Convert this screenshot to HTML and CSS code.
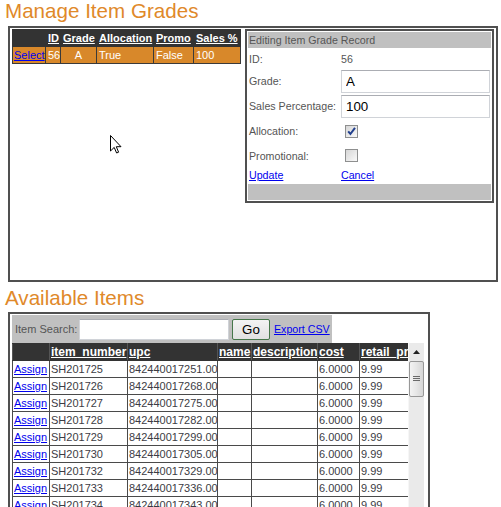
FILE: index.html
```html
<!DOCTYPE html>
<html>
<head>
<meta charset="utf-8">
<title>Manage Item Grades</title>
<link rel="stylesheet" href="styles.css">
</head>
<body>
<h1 class="title title-manage">Manage Item Grades</h1>
<div class="box grades-box">
  <div class="grades-layout">
    <table class="grades">
      <colgroup><col class="c-sel"><col class="c-id"><col class="c-grade"><col class="c-alloc"><col class="c-promo"><col class="c-sales"></colgroup>
      <thead>
        <tr><th></th><th><a href="#">ID</a></th><th><a href="#">Grade</a></th><th><a href="#">Allocation</a></th><th><a href="#">Promo</a></th><th><a href="#">Sales %</a></th></tr>
      </thead>
      <tbody>
        <tr class="selected"><td><a href="#" class="sel-link">Select</a></td><td>56</td><td class="center">A</td><td>True</td><td>False</td><td>100</td></tr>
      </tbody>
    </table>
    <div class="edit">
      <div class="edit-head">Editing Item Grade Record</div>
      <div class="edit-grid">
        <span class="lbl">ID:</span><span class="val">56</span>
        <span class="lbl">Grade:</span><input class="txt" type="text" value="A">
        <span class="lbl">Sales Percentage:</span><input class="txt txt-end" type="text" value="100">
        <span class="lbl">Allocation:</span><span class="chk"><svg width="11" height="11" viewBox="0 0 11 11"><path d="M2.2 5.4 L4.4 8 L9 1.8" fill="none" stroke="#22408e" stroke-width="2"/></svg></span>
        <span class="lbl">Promotional:</span><span class="chk"></span>
        <a href="#" class="lnk">Update</a><a href="#" class="lnk">Cancel</a>
      </div>
      <div class="edit-foot"></div>
    </div>
  </div>
  <svg class="cursor" width="12" height="19" viewBox="0 0 12 19"><path d="M0.5 0.5 L0.5 16 L4.2 12.4 L6.6 18 L8.6 17.2 L6.3 11.7 L11 11.7 Z" fill="#fff" stroke="#000" stroke-width="1" stroke-linejoin="miter"/></svg>
</div>

<h1 class="title title-items">Available Items</h1>
<div class="box items-box">
  <div class="search">
    <span class="search-label">Item Search:</span><input class="search-input" type="text"><button class="go" type="button">Go</button><a href="#" class="export">Export CSV</a>
  </div>
  <div class="items-scroll">
    <div class="items-clip">
      <table class="items">
        <colgroup><col class="i-assign"><col class="i-num"><col class="i-upc"><col class="i-name"><col class="i-desc"><col class="i-cost"><col class="i-retail"></colgroup>
        <thead>
          <tr><th></th><th><a href="#">item_number</a></th><th><a href="#">upc</a></th><th><a href="#">name</a></th><th><a href="#">description</a></th><th><a href="#">cost</a></th><th><a href="#">retail_price</a></th></tr>
        </thead>
        <tbody>
          <tr><td><a href="#">Assign</a></td><td>SH201725</td><td>842440017251.00</td><td></td><td></td><td>6.0000</td><td>9.99</td></tr>
          <tr><td><a href="#">Assign</a></td><td>SH201726</td><td>842440017268.00</td><td></td><td></td><td>6.0000</td><td>9.99</td></tr>
          <tr><td><a href="#">Assign</a></td><td>SH201727</td><td>842440017275.00</td><td></td><td></td><td>6.0000</td><td>9.99</td></tr>
          <tr><td><a href="#">Assign</a></td><td>SH201728</td><td>842440017282.00</td><td></td><td></td><td>6.0000</td><td>9.99</td></tr>
          <tr><td><a href="#">Assign</a></td><td>SH201729</td><td>842440017299.00</td><td></td><td></td><td>6.0000</td><td>9.99</td></tr>
          <tr><td><a href="#">Assign</a></td><td>SH201730</td><td>842440017305.00</td><td></td><td></td><td>6.0000</td><td>9.99</td></tr>
          <tr><td><a href="#">Assign</a></td><td>SH201732</td><td>842440017329.00</td><td></td><td></td><td>6.0000</td><td>9.99</td></tr>
          <tr><td><a href="#">Assign</a></td><td>SH201733</td><td>842440017336.00</td><td></td><td></td><td>6.0000</td><td>9.99</td></tr>
          <tr><td><a href="#">Assign</a></td><td>SH201734</td><td>842440017343.00</td><td></td><td></td><td>6.0000</td><td>9.99</td></tr>
          <tr><td><a href="#">Assign</a></td><td>SH201735</td><td>842440017350.00</td><td></td><td></td><td>6.0000</td><td>9.99</td></tr>
          <tr><td><a href="#">Assign</a></td><td>SH201736</td><td>842440017367.00</td><td></td><td></td><td>6.0000</td><td>9.99</td></tr>
        </tbody>
      </table>
    </div>
    <div class="vscroll">
      <div class="vs-up"><svg width="7" height="4" viewBox="0 0 7 4"><polygon points="0,4 3.5,0 7,4" fill="#222"/></svg></div>
      <div class="vs-thumb"><svg width="7" height="6" viewBox="0 0 7 6"><path d="M0 0.5 H7 M0 2.5 H7 M0 4.5 H7" stroke="#6a6a6a" stroke-width="1"/></svg></div>
    </div>
  </div>
</div>
</body>
</html>
```

FILE: styles.css
```css
html, body {
  margin: 0;
  padding: 0;
  overflow: hidden;
  background: #fff;
}
body {
  font-family: "Liberation Sans", Arial, sans-serif;
  width: 501px;
  height: 507px;
  color: #333;
}
.title {
  margin: 0 0 0 5px;
  height: 22px;
  font-size: 20.6px;
  line-height: 22px;
  font-weight: normal;
  color: #e0892a;
}
.title-manage { margin-bottom: 4px; }
.title-items { margin-top: 5px; margin-bottom: 3px; }

.box {
  position: relative;
  margin-left: 8px;
  border: 2px solid #505050;
  box-sizing: border-box;
}
.grades-box {
  width: 490px;
  height: 256px;
  padding: 1px 2px;
}
.grades-layout {
  display: flex;
  align-items: flex-start;
  gap: 4px;
}

/* grade grid */
.grades {
  width: 228px;
  table-layout: fixed;
  border-collapse: collapse;
  font-size: 11px;
  border: 1px solid #333;
}
.c-sel { width: 33px; }
.c-id { width: 15px; }
.c-grade { width: 36px; }
.c-alloc { width: 57px; }
.c-promo { width: 40px; }
.c-sales { width: 47px; }
.grades th, .grades td {
  height: 16px;
  padding: 0 0 0 2px;
  text-align: left;
  white-space: nowrap;
  overflow: hidden;
}
.grades th {
  background: #333;
  font-weight: bold;
  border: 1px solid #333;
}
.grades th a { color: #fff; text-decoration: underline; }
.grades td {
  color: #fff;
  border: 1px solid #3a3a3a;
}
.grades .selected td { background: #d8882a; }
.grades td.center { text-align: center; padding: 0; }
.grades .sel-link { color: #0000ee; }
.grades td:first-child { padding-left: 1px; }

/* edit panel */
.edit {
  width: 249px;
  border: 2px solid #505050;
  padding: 1px;
  box-sizing: border-box;
  font-size: 8pt;
  color: #555;
}
.edit-head {
  background: #c0c0c0;
  height: 16px;
  line-height: 16px;
  padding-left: 1px;
}
.edit-grid {
  display: grid;
  grid-template-columns: 93px 150px;
  grid-template-rows: 21px 24px 25px 26px 23px 16px;
  align-items: center;
}
.lbl { padding-left: 1px; white-space: nowrap; }
.val { color: #555; }
.txt {
  width: 149px;
  height: 23px;
  box-sizing: border-box;
  margin: 0;
  padding: 0 4px;
  border: 1px solid #d0d3d8;
  border-top-color: #abadb3;
  font-family: "Liberation Sans", Arial, sans-serif;
  font-size: 13.33px;
  color: #000;
  background: #fff;
}
.txt-end { align-self: end; }
.chk {
  width: 13px;
  height: 13px;
  box-sizing: border-box;
  margin-left: 4px;
  border: 1px solid #8e8f8f;
  background: linear-gradient(135deg, #d6d6d6, #f9f9f9);
  display: flex;
  align-items: center;
  justify-content: center;
}
.lnk {
  color: #0000ee;
  text-decoration: underline;
  padding-left: 1px;
  justify-self: start;
}
.edit-grid .lnk:nth-of-type(2) { padding-left: 0; }
.edit-foot {
  background: #c0c0c0;
  height: 16px;
  margin-top: 1px;
}

.cursor {
  position: absolute;
  left: 100px;
  top: 107px;
}

/* items */
.items-box {
  width: 422px;
  height: 230px;
  padding: 1px 2px;
}
.search {
  width: 320px;
  height: 28px;
  background: #c0c0c0;
  display: flex;
  align-items: center;
}
.search-label {
  display: inline-block;
  width: 67px;
  padding-left: 3px;
  box-sizing: border-box;
  font-size: 11px;
  color: #555;
}
.search-input {
  width: 150px;
  height: 21px;
  box-sizing: border-box;
  margin: 0;
  border: 1px solid #d0d3d8;
  border-top-color: #abadb3;
  background: #fff;
}
.go {
  width: 38px;
  height: 21px;
  margin: 0 0 0 3px;
  padding: 0;
  border: 1px solid #46774a;
  border-radius: 2px;
  background: linear-gradient(#f3f3f3, #e1e1e1);
  font-family: "Liberation Sans", Arial, sans-serif;
  font-size: 13.33px;
  color: #000;
}
.export {
  margin-left: 4px;
  font-size: 8pt;
  color: #0000ee;
  text-decoration: underline;
}
.items-scroll {
  display: flex;
  height: 200px;
}
.items-clip {
  width: 396px;
  overflow: hidden;
}
.items {
  width: 407px;
  table-layout: fixed;
  border-collapse: collapse;
  font-size: 11px;
}
.i-assign { width: 37px; }
.i-num { width: 78px; }
.i-upc { width: 90px; }
.i-name { width: 34px; }
.i-desc { width: 66px; }
.i-cost { width: 42px; }
.i-retail { width: 60px; }
.items th, .items td {
  height: 16px;
  padding: 0 0 0 1px;
  text-align: left;
  white-space: nowrap;
  overflow: hidden;
  border: 1px solid #4a4a4a;
}
.items th {
  background: #333;
  font-size: 12px;
  font-weight: bold;
  border-color: #333 #555 #333 #555;
}
.items th a { color: #fff; text-decoration: underline; }
.items td { color: #3c3c44; background: #fff; }
.items td a { color: #0000ee; text-decoration: underline; }

.vscroll {
  width: 16px;
  background: #eaeaea;
  border-left: 1px solid #f6f6f6;
  box-sizing: border-box;
}
.vs-up {
  height: 17px;
  display: flex;
  align-items: center;
  justify-content: center;
}
.vs-thumb {
  height: 36px;
  margin: 1px 0 0 0;
  border: 1px solid #979797;
  border-radius: 2px;
  box-sizing: border-box;
  background: linear-gradient(to right, #f3f3f3, #e6e6e6 50%, #d6d6d6);
  display: flex;
  align-items: center;
  justify-content: center;
}
```
